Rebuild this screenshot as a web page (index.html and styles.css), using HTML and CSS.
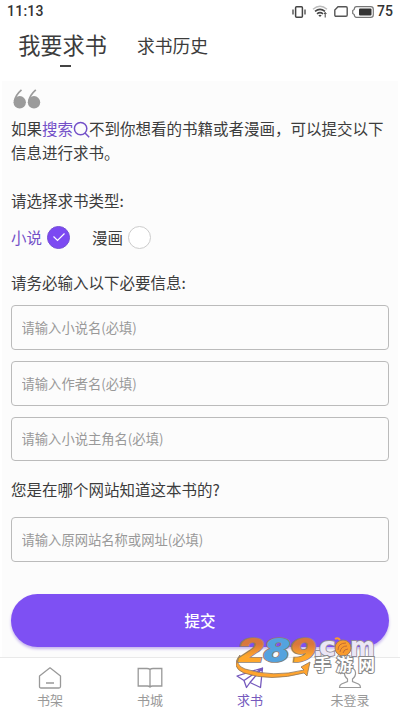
FILE: index.html
```html
<!DOCTYPE html>
<html lang="zh-CN">
<head>
<meta charset="utf-8">
<meta name="viewport" content="width=device-width, initial-scale=1">
<title>我要求书</title>
<link rel="stylesheet" href="styles.css">
</head>
<body>
<div class="app">
  <header class="status">
    <span class="clock">11:13</span>
    <div class="indicators">
      <svg class="vibrate" width="14" height="12" viewBox="0 0 14 12" fill="none" stroke="#444"><rect x="3.6" y=".8" width="6.8" height="10.4" rx="1" stroke-width="1.5"/><path d="M1 3.5v5M13 3.5v5" stroke-width="1.3"/></svg>
      <svg class="wifi" width="16" height="13" viewBox="0 0 16 13" fill="none"><path d="M1 4.2Q8-1.7 15 4.2" stroke="#bbb" stroke-width="1.4"/><path d="M3 6.4q5-4 10 0M5 8.8q3-2.3 6 0" stroke="#444" stroke-width="1.6"/><path d="m6.3 10.3 1.7 1.8 1.7-1.8q-1.7-1.1-3.4 0Z" fill="#444"/><path d="M13.2 7.5v5M12 9l1.2-1.5L14.4 9" stroke="#444"/></svg>
      <svg class="sim" width="14" height="11" viewBox="0 0 14 11" fill="none"><path d="M4 .8h8q1.2 0 1.2 1.2v7q0 1.2-1.2 1.2H2Q.8 10.2.8 9V4Z" stroke="#555" stroke-width="1.4"/></svg>
      <svg class="battery" width="22" height="12" viewBox="0 0 22 12"><path d="M4.5.7h14.2q2.6 0 2.6 2.6v5.4q0 2.6-2.6 2.6H4.5Q2.4 11.3 2.2 8.5L.7 7.5v-3l1.5-1Q2.4.7 4.5.7Z" fill="none" stroke="#777" stroke-width="1.2"/><rect x="7" y="2.5" width="12.5" height="7" rx="1" fill="#333"/></svg>
      <span class="level">75</span>
    </div>
  </header>
  <nav class="tabs">
    <a class="tab current">我要求书</a>
    <a class="tab history">求书历史</a>
  </nav>
  <main class="content">
    <svg class="quote" width="28" height="20" viewBox="0 0 28 20"><g fill="#9b9b9b"><circle cx="6.7" cy="13.3" r="6.2"/><circle cx="21" cy="13.3" r="6.2"/></g><path d="M1.5 12Q2.5 6 8.5.8M15.8 12q1-6 7-11.2" fill="none" stroke="#9b9b9b" stroke-width="1.7"/></svg>
    <p class="intro">如果<a class="search">搜索<svg width="17" height="17" viewBox="0 0 17 17" fill="none" stroke="#7350c8" stroke-width="1.5"><circle cx="7.6" cy="7.6" r="6.2"/><path d="m12 12 4.2 4.2"/></svg></a>不到你想看的书籍或者漫画，可以提交以下<br>信息进行求书。</p>
    <p class="label type-label">请选择求书类型:</p>
    <div class="choices">
      <span class="choice selected">小说<i class="radio"><svg width="14" height="10" viewBox="0 0 14 10" fill="none" stroke="#fff" stroke-width="1.2"><path d="m1.5 4.5 4 4 7-7"/></svg></i></span>
      <span class="choice">漫画<i class="radio"></i></span>
    </div>
    <p class="label required-label">请务必输入以下必要信息:</p>
    <div class="fields">
      <input placeholder="请输入小说名(必填)">
      <input placeholder="请输入作者名(必填)">
      <input placeholder="请输入小说主角名(必填)">
    </div>
    <p class="label source-label">您是在哪个网站知道这本书的?</p>
    <input placeholder="请输入原网站名称或网址(必填)">
    <button class="submit">提交</button>
  </main>
  <nav class="bottom">
    <a class="item"><svg width="24" height="22" viewBox="0 0 24 22" fill="none" stroke="#999" stroke-width="1.3" stroke-linejoin="round"><path d="M12 .8 22.5 9v10.5q0 1.5-1.5 1.5H3q-1.5 0-1.5-1.5V9ZM8 16h8"/></svg>书架</a>
    <a class="item"><svg width="26" height="22" viewBox="0 0 26 22" fill="none" stroke="#999" stroke-width="1.3"><path d="M13 2.5Q12 1.5 10 1.5H1.2v17.5h9.3q1.5 0 2.5 1 1-1 2.5-1h9.3V1.5H16q-2 0-3 1v17.5"/></svg>书城</a>
    <a class="item active"><svg width="28" height="22" viewBox="0 0 28 22" fill="none" stroke="#7559bd" stroke-width="1.3" stroke-linejoin="round"><path d="M26.5 1 1 9l7 4.500 2.500 7 3.500-5 10.500 5L26.500 1 8 13.500M26.500 1 14 15.500"/></svg>求书</a>
    <a class="item"><svg width="24" height="22" viewBox="0 0 24 22" fill="none" stroke="#999" stroke-width="1.2"><path d="M9.5 12Q6 9 6.5 5.5 7 1 12 1t5.5 4.5Q18 9 14.5 12v2.5l6 2.5q2 1 2 3.500h-21Q1.500 18 3.500 17l6-2.500Z"/></svg>未登录</a>
  </nav>
  <svg class="watermark" width="148" height="48" viewBox="0 0 148 48">
    <defs><linearGradient id="orange" gradientUnits="userSpaceOnUse" x1="0" y1="0" x2="0" y2="27"><stop offset=".3" stop-color="#d8773d"/><stop offset=".75" stop-color="#ffa72b"/></linearGradient></defs>
    <path d="M4 19Q-2 29 9 33q28 9 59 1l-3-3 9-5-3 14-3-3Q34 46 8 37-6 31 4 19Z" fill="#ffa42e" stroke="#8f765b" stroke-width=".8"/>
    <g class="digits"><text x="2" y="26" textLength="26" lengthAdjust="spacingAndGlyphs" fill="url(#orange)">2</text><text x="27" y="26" textLength="27" lengthAdjust="spacingAndGlyphs" fill="#53a3df">8</text><text x="53" y="26" textLength="27" lengthAdjust="spacingAndGlyphs" fill="url(#orange)">9</text></g>
    <g class="domain"><text x="77" y="20">.</text><text x="83" y="20" textLength="17" lengthAdjust="spacingAndGlyphs">c</text><text x="114" y="20" textLength="25" lengthAdjust="spacingAndGlyphs">m</text></g>
    <circle cx="107" cy="12" r="8" fill="#f99b2e" stroke="#a17b5c"/><path d="M99 3q3-2 5 1" stroke="#f99b2e" stroke-width="2" fill="none"/><path d="M102 14q0-7 8-7M104 16q1-6 7-6M107 17q1-4 5-4" fill="none" stroke="#c36c34" stroke-width="1"/>
    <text class="site" x="78" y="35" textLength="61">手游网</text>
  </svg>
</div>
</body>
</html>
```
FILE: styles.css
```css
* { box-sizing: border-box; }
body { margin: 0; background: #fff; color: #3c3c3c; font-family: "Noto Sans CJK SC", sans-serif; }
.app { position: relative; width: 400px; height: 712px; display: flex; flex-direction: column; overflow: hidden; }
.status { height: 23px; display: flex; align-items: center; justify-content: space-between; padding: 0 7px; font: 500 14px/23px Roboto, sans-serif; color: #333; }
.clock { letter-spacing: .25px; }
.indicators { display: flex; align-items: center; }
.wifi { margin-left: 6px; }
.sim { margin-left: 6px; }
.battery { margin: 0 3px 0 4px; }
.tabs { height: 58px; display: flex; padding: 6px 18px 0; }
.tab { font-size: 17.8px; line-height: 30px; }
.history { padding-top: 1px; }
.current { display: flex; flex-direction: column; align-items: center; width: 89px; margin-right: 30px; font-size: 22.2px; white-space: nowrap; }
.current::after { content: ""; width: 11px; height: 2px; margin-top: 6px; margin-left: 5px; background: #444; }
.content { height: 576px; margin: 0 2px; padding: 8px 9px 0; background: #fcfcfc; }
.quote { display: block; margin-left: 2px; }
p { margin: 0; font-size: 15.5px; line-height: 24px; white-space: nowrap; }
.intro { margin-top: 7px; }
.search { color: #7350c8; }
.search svg { vertical-align: -3px; margin-right: -1px; }
.type-label { margin-top: 24px; }
.choices { display: flex; align-items: center; gap: 22px; height: 24px; margin-top: 13px; font-size: 15.5px; }
.choice { display: flex; align-items: center; gap: 5px; }
.selected { color: #7350c8; }
.radio { width: 23px; height: 23px; display: grid; place-items: center; border: 1px solid #ccc; border-radius: 50%; background: #fff; }
.selected .radio { background: #7c49f2; border-color: #7550d5; }
.required-label { margin-top: 21px; }
.fields { display: flex; flex-direction: column; gap: 11px; margin-top: 11px; }
input { display: block; width: 378px; height: 44.8px; border: 1px solid #bbb; border-radius: 4px; background: #fcfcfc; padding: 0 9.5px; font: 13.3px "Noto Sans CJK SC", sans-serif; }
input::placeholder { color: #999; opacity: 1; }
.source-label { margin: 16px 0; }
.submit { display: block; width: 378px; height: 53px; margin-top: 32px; padding-bottom: 3px; border: 0; border-radius: 27px; background: #7e50f3; color: #fff; font: 500 15.5px "Noto Sans CJK SC", sans-serif; box-shadow: 0 2px 3px #c5b4ed; }
.bottom { height: 55px; display: grid; grid-template-columns: repeat(4, 1fr); border-top: 1px solid #e9e9e9; }
.item { display: flex; flex-direction: column; align-items: center; padding-top: 9px; color: #999; font-size: 13px; line-height: 20px; }
.item svg { flex: none; margin-bottom: 1px; }
.active { color: #7559bd; }
.watermark { position: absolute; left: 236px; top: 636px; }
.digits { font: italic 900 34px Roboto, sans-serif; stroke: #8d7e75; stroke-width: 1.6px; paint-order: stroke; }
.domain { font: 700 27px "DejaVu Sans", sans-serif; fill: #ebe6f5; stroke: #918a98; stroke-width: 1.8px; paint-order: stroke; }
.site { font: 700 17px "Noto Sans CJK SC", sans-serif; fill: #fff; stroke: #888; stroke-width: 2px; paint-order: stroke; }
```
